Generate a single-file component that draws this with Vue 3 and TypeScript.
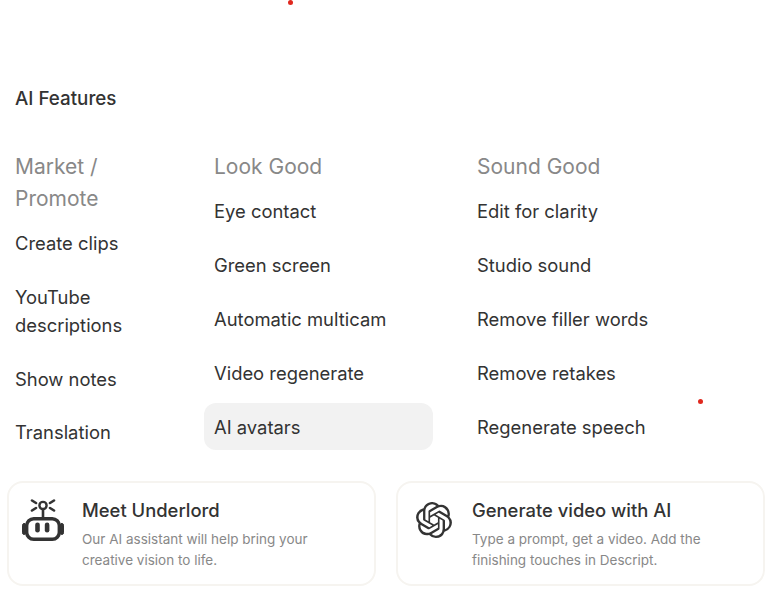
<script setup lang="ts">
const columns = [
  { title: 'Market / Promote', width: 'narrow', items: ['Create clips', 'YouTube descriptions', 'Show notes', 'Translation'] },
  { title: 'Look Good', width: 'mid', items: ['Eye contact', 'Green screen', 'Automatic multicam', 'Video regenerate', 'AI avatars'] },
  { title: 'Sound Good', width: 'wide', items: ['Edit for clarity', 'Studio sound', 'Remove filler words', 'Remove retakes', 'Regenerate speech'] },
]
</script>

<template>
  <div class="page">
    <span class="dot dot-a"></span>
    <span class="dot dot-b"></span>
    <h2 class="title">AI Features</h2>
    <div class="columns">
      <section v-for="col in columns" :key="col.title" class="col" :class="col.width">
        <h3 class="col-title">{{ col.title }}</h3>
        <ul class="list">
          <li v-for="item in col.items" :key="item" class="item" :class="{ active: item === 'AI avatars' }">{{ item }}</li>
        </ul>
      </section>
    </div>
    <div class="cards">
      <article class="card">
        <svg class="robot" width="42" height="43" viewBox="0 0 42 43" fill="none" stroke="#333" stroke-linecap="round">
          <rect x="4.7" y="20.7" width="32.6" height="20.6" rx="7" stroke-width="3.4" />
          <rect x="0.5" y="25.5" width="3.5" height="11" rx="1.7" fill="#333" stroke-width="1" />
          <rect x="38" y="25.5" width="3.5" height="11" rx="1.7" fill="#333" stroke-width="1" />
          <circle cx="21" cy="7.5" r="3.6" stroke-width="2.4" />
          <path d="M21 11v8M10 2.5l4 2.5M32 2.5l-4 2.5M10 12.5l4-2.5M32 12.5l-4-2.5" stroke-width="2.6" />
          <rect x="13.2" y="24.5" width="4.6" height="10" rx="2.3" fill="#333" stroke="none" />
          <rect x="22.8" y="24.5" width="4.6" height="10" rx="2.3" fill="#333" stroke="none" />
        </svg>
        <div class="card-body">
          <h4 class="card-title">Meet Underlord</h4>
          <p class="card-text">Our AI assistant will help bring your creative vision to life.</p>
        </div>
      </article>
      <article class="card">
        <svg class="spiral" width="36" height="36" viewBox="0 0 24 24" fill="#333">
          <path d="M22.2819 9.8211a5.9847 5.9847 0 0 0-.5157-4.9108 6.0462 6.0462 0 0 0-6.5098-2.9A6.0651 6.0651 0 0 0 4.9807 4.1818a5.9847 5.9847 0 0 0-3.9977 2.9 6.0462 6.0462 0 0 0 .7427 7.0966 5.98 5.98 0 0 0 .511 4.9107 6.051 6.051 0 0 0 6.5146 2.9001A5.9847 5.9847 0 0 0 13.2599 24a6.0557 6.0557 0 0 0 5.7718-4.2058 5.9894 5.9894 0 0 0 3.9977-2.9001 6.0557 6.0557 0 0 0-.7475-7.0729zm-9.022 12.6081a4.4755 4.4755 0 0 1-2.8764-1.0408l.1419-.0804 4.7783-2.7582a.7948.7948 0 0 0 .3927-.6813v-6.7369l2.02 1.1686a.071.071 0 0 1 .038.052v5.5826a4.504 4.504 0 0 1-4.4945 4.4944zm-9.6607-4.1254a4.4708 4.4708 0 0 1-.5346-3.0137l.142.0852 4.783 2.7582a.7712.7712 0 0 0 .7806 0l5.8428-3.3685v2.3324a.0804.0804 0 0 1-.0332.0615L9.74 19.9502a4.4992 4.4992 0 0 1-6.1408-1.6464zM2.3408 7.8956a4.485 4.485 0 0 1 2.3655-1.9728V11.6a.7664.7664 0 0 0 .3879.6765l5.8144 3.3543-2.0201 1.1685a.0757.0757 0 0 1-.071 0l-4.8303-2.7865A4.504 4.504 0 0 1 2.3408 7.872zm16.5963 3.8558L13.1038 8.364 15.1192 7.2a.0757.0757 0 0 1 .071 0l4.8303 2.7913a4.4944 4.4944 0 0 1-.6765 8.1042v-5.6772a.79.79 0 0 0-.407-.667zm2.0107-3.0231l-.142-.0852-4.7735-2.7818a.7759.7759 0 0 0-.7854 0L9.409 9.2297V6.8974a.0662.0662 0 0 1 .0284-.0615l4.8303-2.7866a4.4992 4.4992 0 0 1 6.6802 4.66zM8.3065 12.863l-2.02-1.1638a.0804.0804 0 0 1-.038-.0567V6.0742a4.4992 4.4992 0 0 1 7.3757-3.4537l-.142.0805L8.704 5.459a.7948.7948 0 0 0-.3927.6813zm1.0976-2.3654l2.602-1.4998 2.6069 1.4998v2.9994l-2.5974 1.4997-2.6067-1.4997Z" />
        </svg>
        <div class="card-body">
          <h4 class="card-title">Generate video with AI</h4>
          <p class="card-text">Type a prompt, get a video. Add the finishing touches in Descript.</p>
        </div>
      </article>
    </div>
  </div>
</template>

<style>
html, body { background: #fff; overflow: hidden; }
</style>

<style scoped>
.page {
  position: relative;
  width: 768px;
  height: 600px;
  box-sizing: border-box;
  padding-top: 85px;
  font-family: Inter, "Liberation Sans", sans-serif;
  color: #333;
  overflow: hidden;
}
.dot {
  position: absolute;
  width: 5px;
  height: 5px;
  border-radius: 50%;
  background: #e0281e;
}
.dot-a { left: 288px; top: 0; }
.dot-b { left: 698px; top: 399px; }
.title {
  margin: 0 0 38px 15px;
  font-size: 18.8px;
  font-weight: 500;
  line-height: 27px;
}
.columns {
  display: flex;
  gap: 34px;
  padding-left: 5px;
  height: 331px;
}
.col { flex: none; }
.narrow { width: 165px; }
.mid { width: 229px; }
.wide { width: 263px; }
.col-title {
  margin: 0 0 5.2px;
  padding: 1px 0 0 10px;
  font-size: 21px;
  font-weight: 400;
  line-height: 32px;
  color: #888;
}
.list {
  list-style: none;
  margin: 0;
  padding: 0;
  display: flex;
  flex-direction: column;
  gap: 7px;
}
.item {
  padding: 10.3px 10px 8.9px;
  font-size: 18.4px;
  line-height: 27.6px;
  border-radius: 12px;
}
.active { background: #f2f2f2; }
.cards {
  display: flex;
  gap: 20px;
  padding-left: 7px;
}
.card {
  flex: none;
  width: 369px;
  height: 105px;
  box-sizing: border-box;
  border: 2px solid #f6f4f0;
  border-radius: 16px;
  display: flex;
}
.robot { flex: none; margin: 15px 18px 0 13px; }
.spiral { flex: none; margin: 19px 20px 0 18px; }
.card-body { padding-top: 14px; }
.card-title {
  margin: 0 0 4px;
  font-size: 18.4px;
  font-weight: 500;
  line-height: 27.6px;
}
.card-text {
  margin: 0;
  font-size: 13.5px;
  line-height: 21px;
  color: #888;
  width: 250px;
}
</style>
